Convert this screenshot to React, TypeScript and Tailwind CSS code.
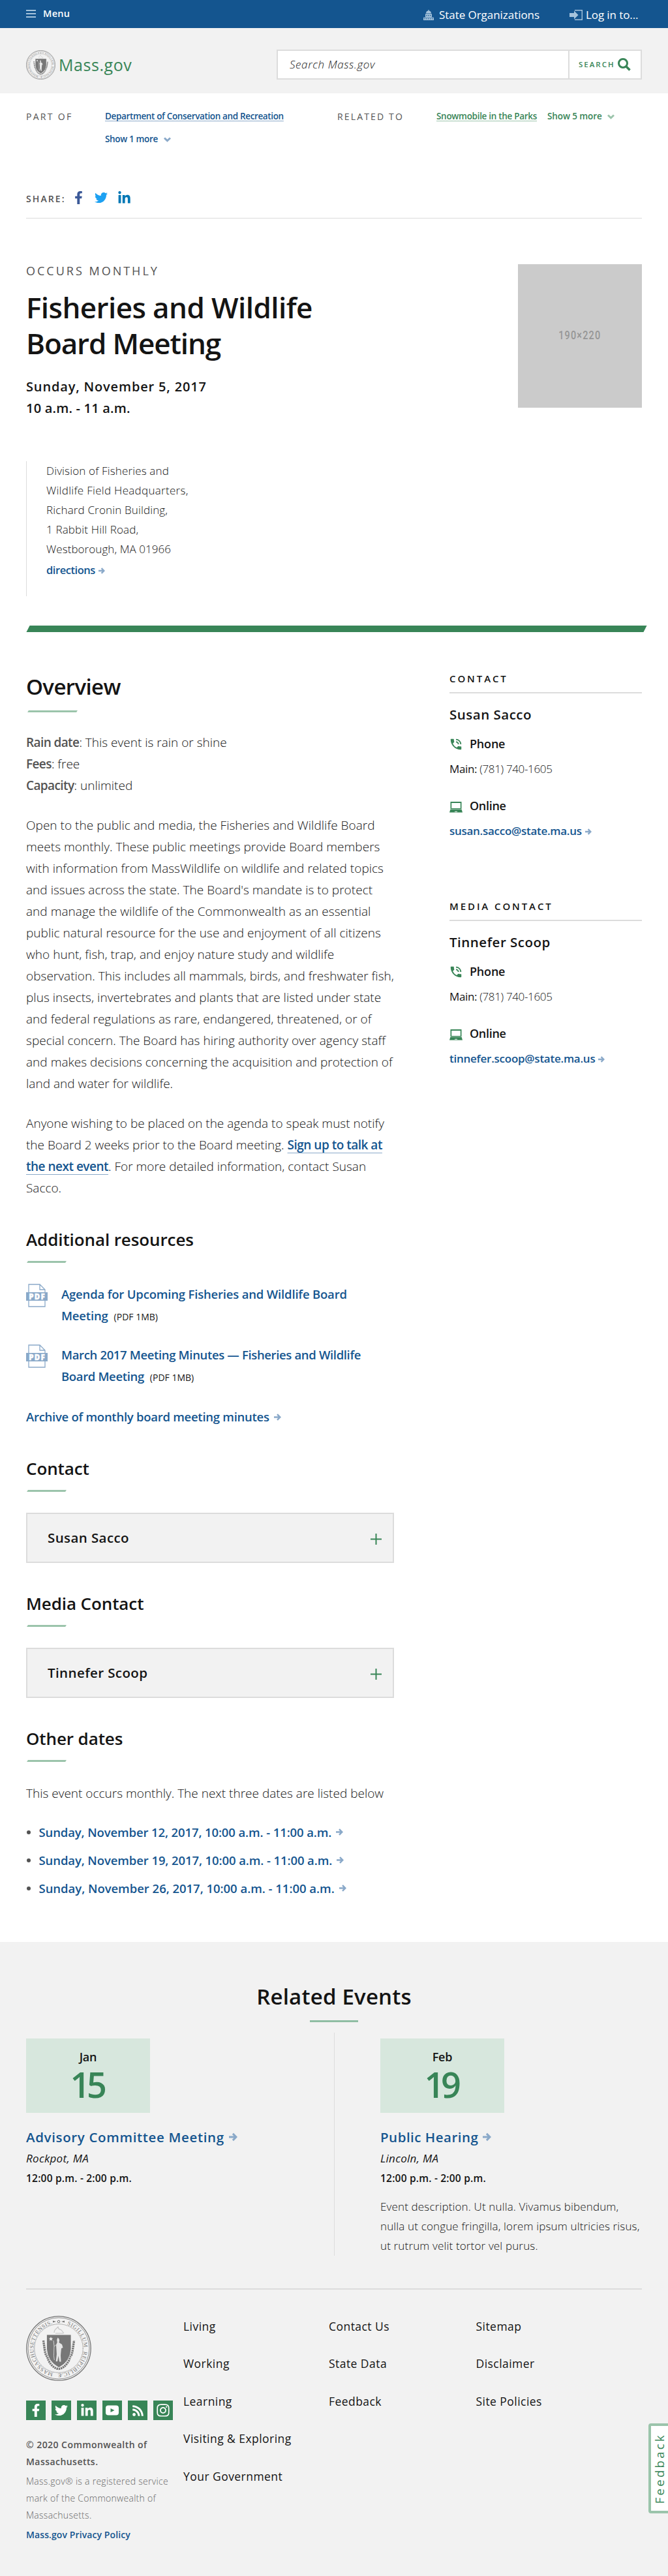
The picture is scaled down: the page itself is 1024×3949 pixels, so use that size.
import type { ReactNode } from 'react';
import { FaFacebookF, FaTwitter, FaLinkedinIn, FaRss, FaInstagram } from 'react-icons/fa';
import { MdPhoneInTalk } from 'react-icons/md';

function Seal({ id, className }: { id: string; className: string }) {
  return (
    <svg viewBox="0 0 100 100" className={className} fill="none" stroke="#777">
      <defs>
        <path id={id} d="M50 11.5a38.5 38.5 0 1 1 0 77a38.5 38.5 0 1 1 0-77" />
      </defs>
      <circle cx="50" cy="50" r="49.2" strokeWidth="1.3" />
      <circle cx="50" cy="50" r="47" strokeWidth=".8" />
      <circle cx="50" cy="50" r="37.2" strokeWidth=".9" strokeDasharray="1.1 .7" />
      <g fill="#777" stroke="none" fontFamily="Liberation Serif, serif" fontSize="8.6" fontWeight="400">
        <text><textPath href={`#${id}`} startOffset="13" textLength="46">SIGILLUM</textPath></text>
        <text><textPath href={`#${id}`} startOffset="65" textLength="57">REIPUBLICÆ</textPath></text>
        <text><textPath href={`#${id}`} startOffset="129" textLength="103">MASSACHUSETTENSIS.</textPath></text>
      </g>
      <path d="M41 7.5l5 1.5-5 1.5zM59 7.5L54 9l5 1.5z" fill="#777" stroke="none" />
      <circle cx="50" cy="9" r="1.8" strokeWidth="1" />
      <path d="M43 26q0-4 4-7l2-2 1 3 4 2 4 5M45 27h12" stroke="#c4c4c4" strokeWidth="1.1" />
      <path d="M26.500 38l2 14q1 8 4 11l2 6q7 12 15.500 12.500q8.500-.5 15.500-12.500l2-6q3-3 4-11l2-14" strokeWidth="3.400" strokeDasharray="2.400 .9" />
      <path d="M31.500 29h37.500v22q-1 19-18.750 28.500q-17.750-9.500-18.750-28.500z" fill="#777" stroke="#f2f2f2" strokeWidth=".8" />
      <path d="M38 32l.9 2.500h2.500l-2 1.600.7 2.500-2.100-1.500-2.100 1.500.7-2.500-2-1.600h2.500z" fill="#f2f2f2" stroke="none" />
      <path d="M48.500 33.500l2 2 .6 3-.8 2.500 4.700 3 1.500 5-2.500 1-.6 6-.4 5 .5 9.500h-2.400l-1.400-9-1.700 8.500h-2.300l1.200-11-.4-7-.5-7.500 1.700-3.500-.5-4z" fill="#e6e6e6" stroke="none" />
      <path d="M42 38q1.500 8 .7 16t.6 14M43 47l4-3" stroke="#cfcfcf" strokeWidth="1" />
    </svg>
  );
}

function Arrow({ className }: { className: string }) {
  return (
    <svg viewBox="0 0 11 11" className={className} fill="none" stroke="currentColor" strokeWidth="2.500">
      <path d="M0 5.500h9M5 1.200l4.300 4.300L5 9.800" />
    </svg>
  );
}

function Chevron({ className }: { className: string }) {
  return (
    <svg viewBox="0 0 11 8" className={className} fill="none" stroke="currentColor" strokeWidth="3">
      <path d="M1 1.500l4.500 4.300L10 1.500" />
    </svg>
  );
}

function Capitol() {
  return (
    <svg viewBox="0 0 16 16" className="h-4 w-4" fill="#a5c3dc">
      <path d="M7.400 0h1.200v1.500a4 4 0 0 1 3.400 4H4a4 4 0 0 1 3.400-4zM3 6.300h10V11.500h3V16H0v-4.500h3z" />
      <path d="M4.500 8h1.300v1.400H4.500zM7.300 8h1.300v1.400H7.300zM10.100 8h1.300v1.400h-1.300zM0 11.800h16v.5H0zM1.500 13.300h1.300v1.300H1.500zM4.300 13.300h1.300v1.300H4.300zM7.200 13.300h1.300v1.300H7.200zM10.100 13.300h1.300v1.300h-1.300zM13 13.300h1.300v1.300H13z" fill="#14558f" />
    </svg>
  );
}

function Laptop() {
  return (
    <svg viewBox="0 0 20 18" className="mt-1 h-[18px] w-5" fill="#388557">
      <path d="M1.500 1h17v11.500h-17zM3.200 3v8h13.600V3z" fillRule="evenodd" />
      <path d="M1.300 13h17.400L20 17.500H0z" />
      <path d="M8 15.700h4v1H8z" fill="#f2f2f2" />
    </svg>
  );
}

function PdfIcon() {
  return (
    <svg viewBox="0 0 33 36" className="h-9 w-[33px] shrink-0">
      <path d="M4 1h17l8 8v26H4zM21 1v8h8" fill="#fff" stroke="#8aa9c9" strokeWidth="1.300" />
      <rect y="13" width="33" height="13" fill="#8aa9c9" />
      <text x="4.200" y="23.600" textLength="24.500" fill="#fff" stroke="#fff" strokeWidth=".4" fontFamily="Open Sans" fontSize="11.500" fontWeight="800">PDF</text>
    </svg>
  );
}

function Bar({ className }: { className: string }) {
  return <div className={`h-[3px] -skew-x-[30deg] bg-[#9bc4ab] ${className}`} />;
}

function SectionHeading({ children, className }: { children: ReactNode; className: string }) {
  return (
    <div className={className}>
      <h2 className="text-[26px] leading-[34px] font-semibold tracking-[-0.1px]">{children}</h2>
      <Bar className="mt-4 ml-[2px] w-[59px]" />
    </div>
  );
}

function Resource({ first, second, tracking, className }: { first: string; second: string; tracking: string; className: string }) {
  return (
    <div className={`flex h-[66px] gap-[21px] ${className}`}>
      <PdfIcon />
      <div className={`-mt-px text-[18.5px] leading-[33px] font-semibold whitespace-nowrap text-[#14558f] ${tracking}`}>
        <div>{first}</div>
        <div className="flex h-[33px] items-baseline">
          {second}
          <span className="ml-[9px] text-[14px] font-normal tracking-normal text-[#141414]">(PDF 1MB)</span>
        </div>
      </div>
    </div>
  );
}

function Accordion({ name }: { name: string }) {
  return (
    <div className="mt-8 flex h-[77px] items-center justify-between border-2 border-[#dcdcdc] bg-[#f2f2f2] pr-[17px] pl-[31px]">
      <span className="text-[20.5px] font-semibold tracking-[0.4px]">{name}</span>
      <svg viewBox="0 0 17 17" className="mt-[3px] h-[17px] w-[17px]" stroke="#388557" strokeWidth="2">
        <path d="M0 8.500h17M8.500 0v17" />
      </svg>
    </div>
  );
}

function ContactCard({ label, name, email, tracking, className }: { label: string; name: string; email: string; tracking: string; className: string }) {
  return (
    <section className={className}>
      <h3 className="border-b-2 border-[#dcdcdc] pb-[9px] text-[15px] leading-6 font-semibold tracking-[2.9px] uppercase">{label}</h3>
      <p className="mt-[17px] text-[20.5px] leading-[30px] font-semibold tracking-[0.5px]">{name}</p>
      <div className="mt-4 flex items-center text-[18px] leading-7 font-semibold tracking-[-0.2px]">
        <MdPhoneInTalk className="mr-[10px] h-[22px] w-[22px] -ml-px mt-px text-[#388557]" />
        Phone
      </div>
      <p className="mt-[11px] text-[17px] leading-7 font-light tracking-[-0.35px]">
        <span className="font-medium">Main:</span> (781) 740-1605
      </p>
      <div className="mt-[28px] flex items-center text-[18px] leading-7 font-semibold tracking-[-0.3px]">
        <span className="mr-[11px]"><Laptop /></span>
        Online
      </div>
      <p className={`mt-[11px] flex items-center gap-[5px] text-[17px] leading-7 font-semibold whitespace-nowrap text-[#14558f] ${tracking}`}>
        {email}
        <Arrow className="mt-[2px] h-[10px] w-[10px] text-[#8aa9c9]" />
      </p>
    </section>
  );
}

function DateCard({ month, day }: { month: string; day: string }) {
  return (
    <div className="h-[114px] w-[190px] bg-[#d7e7dd] pt-[14px] text-center">
      <div className="text-[18px] leading-7 font-semibold tracking-[-0.2px]">{month}</div>
      <div className="pr-1 text-[54px] leading-[56px] font-semibold tracking-[-5.500px] text-[#388557]">{day}</div>
    </div>
  );
}

function EventSummary({ title, tracking, place }: { title: string; tracking: string; place: string }) {
  return (
    <>
      <h3 className={`mt-[22px] flex items-center gap-[7px] text-[20.5px] leading-[30px] font-semibold whitespace-nowrap text-[#14558f] ${tracking}`}>
        {title}
        <Arrow className="h-[14px] w-[13px] text-[#8aa9c9]" />
      </h3>
      <p className="mt-[3px] text-[17px] leading-[30px] italic tracking-[0.3px]">{place}</p>
      <p className="text-[15.5px] leading-[30px] font-semibold tracking-[0.2px]">12:00 p.m. - 2:00 p.m.</p>
    </>
  );
}

const dates = [
  { text: 'Sunday, November 12, 2017, 10:00 a.m. - 11:00 a.m.', tracking: 'tracking-[-0.12px]' },
  { text: 'Sunday, November 19, 2017, 10:00 a.m. - 11:00 a.m.', tracking: 'tracking-[-0.1px]' },
  { text: 'Sunday, November 26, 2017, 10:00 a.m. - 11:00 a.m.', tracking: 'tracking-[-0.03px]' },
];

const footerColumns = [
  ['Living', 'Working', 'Learning', 'Visiting & Exploring', 'Your Government'],
  ['Contact Us', 'State Data', 'Feedback'],
  ['Sitemap', 'Disclaimer', 'Site Policies'],
];

export default function App() {
  return (
    <div className="relative h-[3949px] w-[1024px] overflow-hidden bg-white font-['Open_Sans',sans-serif] text-[#141414]">
      <div className="flex h-[43px] justify-between bg-[#14558f] px-10 text-white">
        <div className="flex h-[41px] items-center gap-[11px]">
          <div className="mt-px flex h-3 w-[15px] flex-col justify-between">
            <div className="h-[2px] bg-[#a5c3dc]" />
            <div className="h-[2px] bg-[#a5c3dc]" />
            <div className="h-[2px] bg-[#a5c3dc]" />
          </div>
          <span className="text-[14.5px] font-semibold tracking-[0.3px]">Menu</span>
        </div>
        <div className="flex h-[45px] items-center text-[17px]">
          <Capitol />
          <span className="ml-[8px] w-[200px] tracking-[-0.05px]">State Organizations</span>
          <svg viewBox="0 0 20 16" className="h-4 w-5" fill="#a5c3dc">
            <path d="M0 5h7V1.500L13.500 8 7 14.500V11H0z" />
            <path d="M8 .7h11.300v14.600H8" fill="none" stroke="#a5c3dc" strokeWidth="1.400" />
          </svg>
          <span className="ml-[5px] w-[86px] tracking-[-0.1px]">Log in to...</span>
        </div>
      </div>

      <header className="flex h-[100px] items-center justify-between bg-[#f2f2f2] px-10">
        <div className="flex items-center gap-[5px] pt-[13px]">
          <Seal id="seal-ring-header" className="h-[45px] w-[45px]" />
          <span className="text-[25px] font-medium tracking-[0.55px] text-[#388557]">Mass.gov</span>
        </div>
        <div className="mt-3 flex h-[46px] w-[560px] border-2 border-[#dcdcdc] bg-white">
          <div className="flex flex-1 items-center pb-px pl-[18px] text-[17px] font-light tracking-[0.6px] italic">Search Mass.gov</div>
          <div className="flex w-[111px] items-center gap-1 border-l-2 border-[#dcdcdc] pl-[14px]">
            <span className="pb-px text-[11.5px] font-semibold tracking-[2px] text-[#388557]">SEARCH</span>
            <svg viewBox="0 0 20 20" className="h-5 w-5" fill="none" stroke="#388557">
              <circle cx="8" cy="8" r="6.500" strokeWidth="3" />
              <path d="M12.500 12.500l6 6" strokeWidth="3.600" />
            </svg>
          </div>
        </div>
      </header>

      <div className="px-10">
        <div className="flex pt-[18px] text-[13.5px] leading-[35px] font-semibold">
          <span className="w-[121px] text-[14px] font-normal tracking-[2.300px] text-[#535353]">PART OF</span>
          <div className="w-[356px] text-[#14558f]">
            <div className="tracking-[-0.36px] whitespace-nowrap underline decoration-[#8aa9c9] decoration-1 underline-offset-2 [text-decoration-skip-ink:none]">
              Department of Conservation and Recreation
            </div>
            <div className="flex items-center gap-[9px] tracking-[-0.35px]">
              Show 1 more
              <Chevron className="h-2 w-[11px] text-[#8aa9c9]" />
            </div>
          </div>
          <span className="w-[152px] text-[14px] font-normal tracking-[2.150px] text-[#535353]">RELATED TO</span>
          <div className="flex h-[35px] items-center whitespace-nowrap text-[#388557]">
            <span className="w-[170px] tracking-[-0.3px] underline decoration-[#9bc4ab] decoration-1 underline-offset-2 [text-decoration-skip-ink:none]">
              Snowmobile in the Parks
            </span>
            <span className="mr-[8px] tracking-[-0.1px]">Show 5 more</span>
            <Chevron className="h-2 w-[11px] text-[#9bc4ab]" />
          </div>
        </div>

        <div className="mt-[61px] flex h-[43px] items-start border-b border-[#dcdcdc]">
          <span className="w-[73px] text-[14px] leading-[26px] font-semibold tracking-[2.100px] text-[#535353]">SHARE:</span>
          <div className="flex h-[22px] items-center">
            <FaFacebookF className="h-5 w-[15px] text-[#3b5998]" />
            <FaTwitter className="ml-[17px] h-5 w-5 text-[#1da1f2]" />
            <FaLinkedinIn className="ml-[15px] h-[21px] w-[21px] text-[#0077b5]" />
          </div>
        </div>

        <div className="flex justify-between pt-[68px]">
          <div>
            <div className="text-[18px] leading-6 tracking-[3px] text-[#535353]">OCCURS MONTHLY</div>
            <h1 className="mt-[17px] text-[44px] leading-[55px] font-semibold tracking-[-0.58px] whitespace-nowrap">
              Fisheries and Wildlife
              <br />
              <span className="tracking-[-1.100px]">Board Meeting</span>
            </h1>
            <p className="mt-[22px] text-[20px] leading-[33px] font-semibold tracking-[0.84px]">
              Sunday, November 5, 2017
              <br />
              <span className="tracking-[0.2px]">10 a.m. - 11 a.m.</span>
            </p>
          </div>
          <div className="mt-[2px] flex h-[220px] w-[190px] items-center justify-center bg-[#cbcbcb] font-['Roboto'] text-[18.5px] font-medium tracking-[1.500px] text-[#969696]">
            <span className="scale-x-[0.78]">190×220</span>
          </div>
        </div>

        <div className="mt-[65px] h-[207px] border-l border-[#dcdcdc] pl-[30px] text-[17px] leading-[30px] font-light">
          <p className="tracking-[0.15px] whitespace-nowrap">
            Division of Fisheries and
            <br />
            <span className="tracking-[0.3px]">Wildlife Field Headquarters,</span>
            <br />
            Richard Cronin Building,
            <br />
            1 Rabbit Hill Road,
            <br />
            <span className="tracking-[0.07px]">Westborough, MA 01966</span>
          </p>
          <p className="mt-[2px] flex items-center gap-[5px] text-[16.5px] font-semibold tracking-[-0.45px] text-[#14558f]">
            directions
            <Arrow className="mt-px h-[10px] w-[10px] text-[#8aa9c9]" />
          </p>
        </div>

        <div className="mt-[45px] ml-[3px] h-[10px] w-[946px] -skew-x-[27deg] bg-[#388557]" />

        <div className="flex justify-between">
          <main className="w-[564px] pt-[64px]">
            <h2 className="text-[33px] leading-10 font-semibold tracking-[-0.6px]">Overview</h2>
            <Bar className="mt-[16px] ml-[2.500px] w-[75px]" />
            <div className="mt-[30px] text-[19px] leading-[33px] font-light whitespace-nowrap">
              <p><span className="font-semibold tracking-[-0.6px] text-[#535353]">Rain date</span>: This event is rain or shine</p>
              <p><span className="font-semibold tracking-[-0.6px] text-[#535353]">Fees</span>: free</p>
              <p><span className="font-semibold tracking-[-0.6px] text-[#535353]">Capacity</span>: unlimited</p>
              <p className="mt-7 tracking-[0.03px]">
                Open to the public and media, the Fisheries and Wildlife Board<br />
                meets monthly. These public meetings provide Board members<br />
                with information from MassWildlife on wildlife and related topics<br />
                and issues across the state. The Board's mandate is to protect<br />
                and manage the wildlife of the Commonwealth as an essential<br />
                public natural resource for the use and enjoyment of all citizens<br />
                who hunt, fish, trap, and enjoy nature study and wildlife<br />
                observation. This includes all mammals, birds, and freshwater fish,<br />
                plus insects, invertebrates and plants that are listed under state<br />
                and federal regulations as rare, endangered, threatened, or of<br />
                special concern. The Board has hiring authority over agency staff<br />
                and makes decisions concerning the acquisition and protection of<br />
                land and water for wildlife.
              </p>
              <p className="mt-7 h-[132px]">
                Anyone wishing to be placed on the agenda to speak must notify<br />
                the Board 2 weeks prior to the Board meeting.{' '}
                <span className="font-semibold tracking-[-0.5px] text-[#14558f] underline decoration-[#8aa9c9] decoration-1 underline-offset-[5px] [text-decoration-skip-ink:none]">
                  Sign up to talk at
                  <br />
                  the next event
                </span>
                . For more detailed information, contact Susan<br />
                Sacco.
              </p>
            </div>

            <SectionHeading className="mt-[45px]">Additional resources</SectionHeading>
            <Resource className="mt-8" tracking="tracking-[-0.18px]" first="Agenda for Upcoming Fisheries and Wildlife Board" second="Meeting" />
            <Resource className="mt-[27px]" tracking="tracking-[-0.35px]" first="March 2017 Meeting Minutes — Fisheries and Wildlife" second="Board Meeting" />
            <p className="mt-7 flex items-center gap-[7px] text-[18.5px] leading-[33px] font-semibold tracking-[-0.27px] whitespace-nowrap text-[#14558f]">
              Archive of monthly board meeting minutes
              <Arrow className="mt-px h-[11px] w-[11px] text-[#8aa9c9]" />
            </p>

            <SectionHeading className="mt-[46px]">Contact</SectionHeading>
            <Accordion name="Susan Sacco" />
            <SectionHeading className="mt-[45px]">Media Contact</SectionHeading>
            <Accordion name="Tinnefer Scoop" />
            <SectionHeading className="mt-[45px]">Other dates</SectionHeading>
            <p className="mt-[32px] text-[19px] leading-[33px] font-light whitespace-nowrap">
              This event occurs monthly. The next three dates are listed below
            </p>
            <ul className="mt-[21px] text-[18.5px] leading-[43px] font-semibold text-[#14558f]">
              {dates.map((d) => (
                <li key={d.text} className={`flex items-center whitespace-nowrap ${d.tracking}`}>
                  <span className="mr-[13px] ml-[0.5px] h-[6px] w-[6px] rounded-full bg-[#535353]" />
                  {d.text}
                  <Arrow className="ml-[7px] h-[11px] w-[11px] text-[#8aa9c9]" />
                </li>
              ))}
            </ul>
          </main>

          <aside className="w-[295px] pt-[59px]">
            <ContactCard className="" label="Contact" name="Susan Sacco" email="susan.sacco@state.ma.us" tracking="tracking-[-0.28px]" />
            <ContactCard className="mt-[89px]" label="Media Contact" name="Tinnefer Scoop" email="tinnefer.scoop@state.ma.us" tracking="tracking-[-0.25px]" />
          </aside>
        </div>
      </div>

      <div className="mt-[61px] h-[972px] bg-[#f2f2f2] px-10">
        <section className="pt-[64px]">
          <h2 className="text-center text-[33px] leading-10 font-semibold tracking-[0.2px]">Related Events</h2>
          <div className="mx-auto mt-[16px] h-[3px] w-[74px] bg-[#8fbda3]" />
          <div className="mt-4 flex h-[342px]">
            <div className="w-[473px] border-r border-[#dcdcdc] pt-[9px]">
              <DateCard month="Jan" day="15" />
              <EventSummary title="Advisory Committee Meeting" tracking="tracking-[0.65px]" place="Rockpot, MA" />
            </div>
            <div className="pt-[9px] pl-[70px]">
              <DateCard month="Feb" day="19" />
              <EventSummary title="Public Hearing" tracking="tracking-[0.5px]" place="Lincoln, MA" />
              <p className="mt-[14px] text-[17px] leading-[30px] font-light tracking-[0.15px] whitespace-nowrap">
                Event description. Ut nulla. Vivamus bibendum,
                <br />
                nulla ut congue fringilla, lorem ipsum ultricies risus,
                <br />
                ut rutrum velit tortor vel purus.
              </p>
            </div>
          </div>
        </section>

        <footer className="mt-[50px] flex border-t-2 border-[#dcdcdc]">
          <div className="w-[241px] pt-10">
            <Seal id="seal-ring-footer" className="h-[100px] w-[100px]" />
            <div className="mt-[30px] flex gap-[9px] text-white">
              <span className="flex h-[30px] w-[30px] items-center justify-center bg-[#388557]"><FaFacebookF className="h-5 w-5" /></span>
              <span className="flex h-[30px] w-[30px] items-center justify-center bg-[#388557]"><FaTwitter className="h-5 w-5" /></span>
              <span className="flex h-[30px] w-[30px] items-center justify-center bg-[#388557]"><FaLinkedinIn className="h-[21px] w-[21px]" /></span>
              <span className="flex h-[30px] w-[30px] items-center justify-center bg-[#388557]">
                <svg viewBox="0 0 20 16" className="h-4 w-5">
                  <rect y=".5" width="20" height="15" rx="4" fill="#fff" />
                  <path d="M7.500 5l6 3-6 3z" fill="#388557" />
                </svg>
              </span>
              <span className="flex h-[30px] w-[30px] items-center justify-center bg-[#388557]"><FaRss className="h-[19px] w-[19px]" /></span>
              <span className="flex h-[30px] w-[30px] items-center justify-center bg-[#388557]"><FaInstagram className="h-[22px] w-[22px]" /></span>
            </div>
            <div className="mt-[25px] text-[14px] leading-[26px] whitespace-nowrap">
              <p className="font-semibold tracking-[0.45px] text-[#535353]">
                © 2020 Commonwealth of
                <br />
                Massachusetts.
              </p>
              <p className="mt-1 font-light tracking-[0.28px] text-[#666]">
                Mass.gov® is a registered service
                <br />
                mark of the Commonwealth of
                <br />
                Massachusetts.
              </p>
              <p className="mt-1 font-semibold tracking-[0.1px] text-[#14558f]">Mass.gov Privacy Policy</p>
            </div>
          </div>
          <div className="grid grid-cols-[223px_225.5px_auto] pt-[27.500px] text-[17.5px] leading-[57.500px] font-medium tracking-[0.45px] whitespace-nowrap">
            {footerColumns.map((column) => (
              <ul key={column[0]}>
                {column.map((item) => (
                  <li key={item}>{item}</li>
                ))}
              </ul>
            ))}
          </div>
        </footer>
      </div>

      <div className="absolute top-[3715px] -right-1 flex h-[138px] w-[34px] items-center justify-center rounded-[4px] border-4 border-[#9bc4ab] bg-white">
        <span className="rotate-180 text-[18.5px] leading-5 font-medium tracking-[3.300px] text-[#388557] [writing-mode:vertical-rl]">Feedback</span>
      </div>
    </div>
  );
}
